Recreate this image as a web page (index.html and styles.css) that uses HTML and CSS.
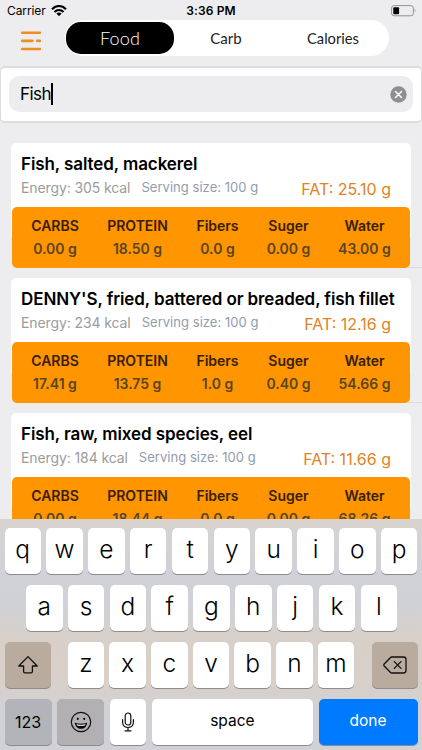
FILE: index.html
```html
<!DOCTYPE html>
<html lang="en">
<head>
<meta charset="utf-8">
<title>Food search</title>
<link rel="stylesheet" href="styles.css">
</head>
<body>
<div class="screen">
  <header class="status">
    <div class="carrier"><span>Carrier</span>
      <svg width="16" height="12" viewBox="0 0 16 12"><g fill="none" stroke="#000" stroke-width="2.100"><path d="M1 4.200C5-.1 11-.1 15 4.200"/><path d="M3.500 7C6 4.400 10 4.400 12.500 7"/></g><path d="M5.400 8.600C7 7.200 9 7.200 10.600 8.600L8 11.300Z"/></svg>
    </div>
    <span class="clock">3:36 PM</span>
    <svg class="battery" width="26" height="12" viewBox="0 0 26 12"><rect x=".6" y=".6" width="21.800" height="10.200" rx="2.500" fill="none" stroke="#929294"/><rect x="2.300" y="2.200" width="5.800" height="7" rx="1" fill="#000"/><path d="M23.800 3.800q1.600 1.800 0 3.800z" fill="#929294"/></svg>
  </header>
  <nav class="nav">
    <svg class="menu" width="22" height="20" viewBox="0 0 22 20"><path d="M2.200 1.800H19.800M2.200 9.900H12.300M17.300 9.900H19.800M2.200 18H19.800" stroke="#f28c1f" stroke-width="2.600" stroke-linecap="round"/></svg>
    <div class="tabs"><span class="tab active">Food</span><span class="tab carb">Carb</span><span class="tab calories">Calories</span></div>
  </nav>
  <div class="search">
    <div class="field"><span class="query">Fish</span><i class="caret"></i>
      <svg class="clear" width="17" height="17" viewBox="0 0 17 17"><circle cx="8.500" cy="8.500" r="8.200" fill="#8e8e93"/><path d="M5.500 5.500l6 6M11.500 5.500l-6 6" stroke="#fff" stroke-width="1.500" stroke-linecap="round"/></svg>
    </div>
  </div>
  <main class="list">
    <article class="item"><div class="card">
      <h2>Fish, salted, mackerel</h2>
      <div class="meta"><span class="energy">Energy: 305 kcal</span><span class="serving">Serving size: 100 g</span><span class="fat">FAT: 25.10 g</span></div>
      <div class="facts"><div><b>CARBS</b><span>0.00 g</span></div><div><b>PROTEIN</b><span>18.50 g</span></div><div><b>Fibers</b><span>0.0 g</span></div><div><b>Suger</b><span>0.00 g</span></div><div><b>Water</b><span>43.00 g</span></div></div>
    </div></article>
    <article class="item"><div class="card">
      <h2>DENNY'S, fried, battered or breaded, fish fillet</h2>
      <div class="meta"><span class="energy">Energy: 234 kcal</span><span class="serving">Serving size: 100 g</span><span class="fat">FAT: 12.16 g</span></div>
      <div class="facts"><div><b>CARBS</b><span>17.41 g</span></div><div><b>PROTEIN</b><span>13.75 g</span></div><div><b>Fibers</b><span>1.0 g</span></div><div><b>Suger</b><span>0.40 g</span></div><div><b>Water</b><span>54.66 g</span></div></div>
    </div></article>
    <article class="item"><div class="card">
      <h2>Fish, raw, mixed species, eel</h2>
      <div class="meta"><span class="energy">Energy: 184 kcal</span><span class="serving">Serving size: 100 g</span><span class="fat">FAT: 11.66 g</span></div>
      <div class="facts"><div><b>CARBS</b><span>0.00 g</span></div><div><b>PROTEIN</b><span>18.44 g</span></div><div><b>Fibers</b><span>0.0 g</span></div><div><b>Suger</b><span>0.00 g</span></div><div><b>Water</b><span>68.26 g</span></div></div>
    </div></article>
  </main>
  <section class="keyboard">
    <div class="row"><span class="key">q</span><span class="key">w</span><span class="key">e</span><span class="key">r</span><span class="key">t</span><span class="key">y</span><span class="key">u</span><span class="key">i</span><span class="key">o</span><span class="key">p</span></div>
    <div class="row middle"><span class="key">a</span><span class="key">s</span><span class="key">d</span><span class="key">f</span><span class="key">g</span><span class="key">h</span><span class="key">j</span><span class="key">k</span><span class="key">l</span></div>
    <div class="row">
      <span class="key shift"><svg width="22" height="20" viewBox="0 0 22 20"><path d="M11 1.600L20.200 11H15.400V16.500Q15.400 17.800 14.200 17.800H7.800Q6.600 17.800 6.600 16.500V11H1.800Z" fill="none" stroke="#111" stroke-width="1.300" stroke-linejoin="round"/></svg></span>
      <span class="key">z</span><span class="key">x</span><span class="key">c</span><span class="key">v</span><span class="key">b</span><span class="key">n</span><span class="key">m</span>
      <span class="key delete"><svg width="24" height="18" viewBox="0 0 24 18"><path d="M8.800 1H20.500Q23 1 23 3.500V14.500Q23 17 20.500 17H8.800Q8 17 7.300 16.300L1.200 10Q.4 9 1.200 8L7.300 1.700Q8 1 8.800 1ZM11.300 5.600L18 12.400M18 5.600L11.300 12.400" fill="none" stroke="#111" stroke-width="1.300" stroke-linecap="round"/></svg></span>
    </div>
    <div class="row bottom">
      <span class="key num">123</span>
      <span class="key emoji"><svg width="22" height="22" viewBox="0 0 22 22"><circle cx="11" cy="11" r="9.700" fill="none" stroke="#111" stroke-width="1.200"/><circle cx="7.800" cy="7.800" r="1.100"/><circle cx="14.200" cy="7.800" r="1.100"/><path d="M4.700 11.700Q11 13.700 17.300 11.700Q16.300 17.700 11 17.700Q5.700 17.700 4.700 11.700Z"/><path d="M6.300 13.100Q11 14.500 15.700 13.100L15 14.500Q11 15.500 7 14.500Z" fill="#d8d8d8"/></svg></span>
      <span class="key mic"><svg width="14" height="20" viewBox="0 0 14 20"><g fill="none" stroke="#111" stroke-width="1.200" stroke-linecap="round"><rect x="4.200" y="1" width="5.600" height="12" rx="2.800"/><path d="M1.600 7.500V10.300C1.600 17.200 12.400 17.200 12.400 10.300V7.500M7 15.500V18.800M4 18.800H10"/></g></svg></span>
      <span class="key space">space</span>
      <span class="key done">done</span>
    </div>
  </section>
</div>
</body>
</html>
```
FILE: styles.css
```css
* { box-sizing: border-box; }
body { margin: 0; font-family: Inter, "Liberation Sans", sans-serif; color: #000; }
svg { display: block; flex: none; }
.screen { width: 422px; height: 750px; overflow: hidden; background: #ededef; display: flex; flex-direction: column; }

.status { height: 20px; flex: none; display: grid; grid-template-columns: 1fr auto 1fr; align-items: center; padding: 2px 5px 0 7px; }
.carrier { display: flex; align-items: center; gap: 5px; font-size: 12px; line-height: 18px; letter-spacing: -.1px; }
.clock { font-size: 12px; line-height: 18px; font-weight: 600; letter-spacing: .1px; margin-right: 2px; }
.battery { justify-self: end; }

.nav { height: 46px; flex: none; display: flex; align-items: flex-start; padding-left: 20px; }
.menu { margin-top: 11px; }
.tabs { margin-left: 23px; width: 324px; height: 36px; border-radius: 18px; background: #fff; display: grid; grid-template-columns: 108px 104px 110px; padding: 2px 1px; font-family: Lato, sans-serif; font-size: 15px; line-height: 32px; text-align: center; color: #222; }
.active { background: #000; color: #fff; border-radius: 15px; font-size: 18px; font-weight: 300; letter-spacing: .2px; }
.calories { font-size: 14.700px; }

.search { height: 57px; flex: none; background: #fff; border: 1px solid #dcdcde; border-width: 2px 1px; border-radius: 5px; padding: 8px; }
.field { height: 36px; border-radius: 10px; background: #ededef; display: flex; align-items: center; padding: 0 6px 0 11px; font-size: 17px; }
.query { letter-spacing: -.55px; }
.caret { width: 2px; height: 22px; background: #000; }
.clear { margin-left: auto; }

.list { flex: none; height: 396px; overflow: hidden; padding-top: 10px; }
.item { height: 135px; padding: 10px 11px 0; background: linear-gradient(#dadadc, #dadadc) no-repeat right bottom / 14px 1px; }
.card { width: 400px; height: 125px; border-radius: 5px; background: #fff linear-gradient(#ededef, #ededef) no-repeat bottom / 100% 30px; padding-top: 10px; }
.card h2 { margin: 0 0 0 10px; font-size: 17px; line-height: 22px; font-weight: 600; letter-spacing: -.09px; white-space: nowrap; }
.meta { height: 32px; display: flex; padding: 3px 20px 0 10px; line-height: 20px; white-space: nowrap; }
.energy { font-size: 14px; letter-spacing: -.1px; color: #9b9b9b; }
.serving { font-size: 13px; letter-spacing: .04px; color: #929cad; margin-left: 11px; line-height: 19px; }
.fat { font-size: 16px; color: #df8224; margin-left: auto; padding-top: 2px; line-height: 19px; }
.facts { margin: 0 1px; height: 61px; background: #ff9500; border-radius: 5px; display: grid; grid-template-columns: 86px 79px 81px 61px 91px; padding-top: 8px; text-align: center; font-size: 14px; line-height: 22px; }
.facts b, .facts span { display: block; font-weight: 600; white-space: nowrap; }
.facts b { color: #37200a; }
.facts span { color: #5a4521; line-height: 24px; }

.keyboard { height: 231px; flex: none; padding: 9px 4.500px 0; display: flex; flex-direction: column; gap: 11px; background: linear-gradient(#d8d3cf 0, #d1d2d7 18%, #d0d1d6 38%, #d8d0c8 52%, #d8d0c9 70%, #d1d1d5 83%, #d0d2d8 100%); }
.row { height: 46px; flex: none; display: flex; justify-content: space-between; }
.middle { padding: 0 20.500px 0 21.500px; }
.key { width: 36.500px; height: 46px; border-radius: 5px; background: #fff; box-shadow: 0 1px 0 #8b8c90; display: flex; align-items: center; justify-content: center; font-size: 24.500px; font-weight: 300; line-height: 42px; padding-bottom: 5px; }
.shift, .delete { width: 46px; background: #b9ab9d; padding-bottom: 0; }
.shift { margin-right: 12px; }
.delete { margin-left: 12px; }
.num, .emoji { width: 47px; background: #b2b4ba; }
.num, .space, .done { font-weight: 400; font-size: 15.500px; padding-bottom: 3px; }
.num { padding-bottom: 0; font-size: 16px; }
.emoji { background: #b2b0b2; padding-bottom: 0; }
.mic { padding-bottom: 0; }
.space { width: 161px; }
.done { width: 99px; background: #007aff; color: #fff; }
```
